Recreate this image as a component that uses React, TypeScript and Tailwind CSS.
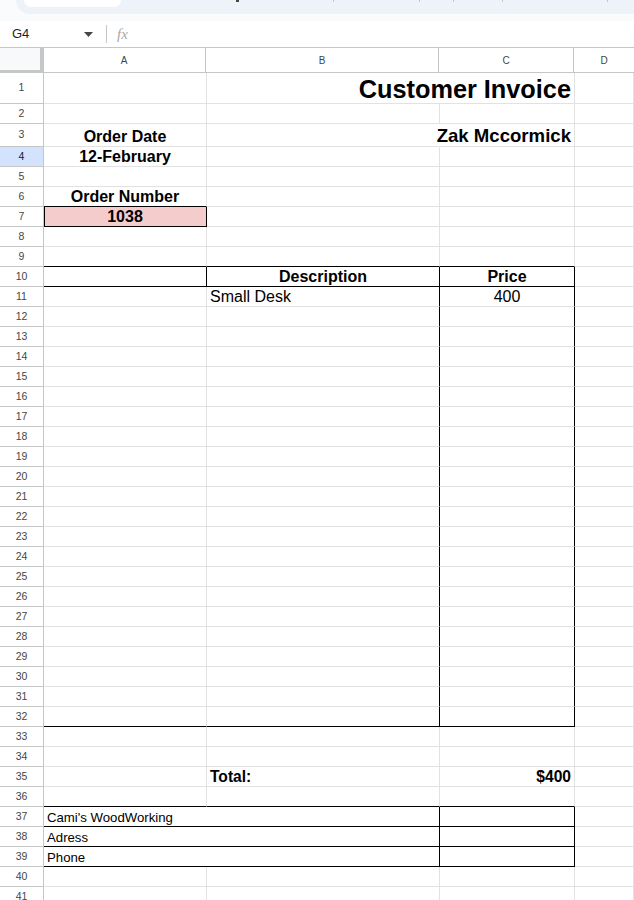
import React from 'react';

type Side = 'grid' | 'black' | 'none';

interface CellSpec {
  w: string;
  text?: string;
  align?: 'left' | 'center' | 'right';
  size?: string;
  bold?: boolean;
  r?: Side;
  b?: Side;
  extra?: string;
}

const colorR = (s: Side = 'grid') =>
  s === 'black' ? 'border-r-black' : s === 'none' ? 'border-r-white' : 'border-r-[#e2e2e2]';
const colorB = (s: Side = 'grid') =>
  s === 'black' ? 'border-b-black' : s === 'none' ? 'border-b-white' : 'border-b-[#e2e2e2]';

const A = 'w-[163px]';
const B = 'w-[233px]';
const C = 'w-[135px]';
const D = 'flex-1';
const BC = 'w-[368px]';
const AB = 'w-[396px]';

const Cell: React.FC<{ c: CellSpec }> = ({ c }) => {
  const justify =
    c.align === 'center' ? 'justify-center' : c.align === 'right' ? 'justify-end' : 'justify-start';
  return (
    <div
      className={`${c.w} shrink-0 flex items-end ${justify} px-[3px] border-r border-b ${colorR(c.r)} ${colorB(
        c.b
      )} ${c.extra ?? ''}`}
    >
      {c.text && (
        <span
          className={`whitespace-nowrap text-black ${c.size ?? 'text-[16px] leading-[18px]'} ${
            c.bold ? 'font-bold' : ''
          }`}
        >
          {c.text}
        </span>
      )}
    </div>
  );
};

const Row: React.FC<{ n: number; h: string; cells: CellSpec[]; active?: boolean }> = ({ n, h, cells, active }) => (
  <div className={`flex ${h}`}>
    <div
      className={`w-[44px] shrink-0 flex items-center justify-center border-r border-b border-[#c4c7c5] text-[10.5px] ${
        active ? 'bg-[#d3e3fd] text-[#041e49]' : 'bg-white text-[#444746]'
      }`}
    >
      {n}
    </div>
    {cells.map((c, i) => (
      <Cell key={i} c={c} />
    ))}
  </div>
);

const plain = (): CellSpec[] => [{ w: A }, { w: B }, { w: C }, { w: D }];

const boxMiddle = (): CellSpec[] => [{ w: A }, { w: B, r: 'black' }, { w: C, r: 'black' }, { w: D }];

const footer = (text: string): CellSpec[] => [
  { w: AB, text, size: 'text-[13.2px] leading-[15px]', r: 'black', b: 'black', extra: 'pb-[1px]' },
  { w: C, r: 'black', b: 'black' },
  { w: D },
];

export default function App() {
  const rows: { n: number; h: string; cells: CellSpec[] }[] = [];

  rows.push({
    n: 1,
    h: 'h-[31px]',
    cells: [
      { w: A },
      { w: BC, text: 'Customer Invoice', bold: true, align: 'right', size: 'text-[25.3px] leading-[28px]' },
      { w: D },
    ],
  });
  rows.push({ n: 2, h: 'h-[20px]', cells: plain() });
  rows.push({
    n: 3,
    h: 'h-[23px]',
    cells: [
      { w: A, text: 'Order Date', bold: true, align: 'center' },
      { w: B, r: 'none' },
      {
        w: C,
        text: 'Zak Mccormick',
        bold: true,
        align: 'right',
        size: 'text-[18.6px] leading-[21px]',
        extra: 'overflow-visible',
      },
      { w: D },
    ],
  });
  rows.push({ n: 4, h: 'h-[20px]', cells: [{ w: A, text: '12-February', bold: true, align: 'center' }, { w: B }, { w: C }, { w: D }] });
  rows.push({ n: 5, h: 'h-[20px]', cells: plain() });
  rows.push({
    n: 6,
    h: 'h-[20px]',
    cells: [{ w: A, text: 'Order Number', bold: true, align: 'center', b: 'black' }, { w: B }, { w: C }, { w: D }],
  });
  rows.push({
    n: 7,
    h: 'h-[20px]',
    cells: [
      {
        w: A,
        text: '1038',
        bold: true,
        align: 'center',
        r: 'black',
        b: 'black',
        extra: 'bg-[#f4cccc] shadow-[inset_1px_0_0_#000]',
      },
      { w: B },
      { w: C },
      { w: D },
    ],
  });
  rows.push({ n: 8, h: 'h-[20px]', cells: plain() });
  rows.push({
    n: 9,
    h: 'h-[20px]',
    cells: [{ w: A, b: 'black' }, { w: B, b: 'black' }, { w: C, b: 'black' }, { w: D }],
  });
  rows.push({
    n: 10,
    h: 'h-[20px]',
    cells: [
      { w: A, r: 'black', b: 'black' },
      { w: B, text: 'Description', bold: true, align: 'center', r: 'black', b: 'black' },
      { w: C, text: 'Price', bold: true, align: 'center', r: 'black', b: 'black' },
      { w: D },
    ],
  });
  rows.push({
    n: 11,
    h: 'h-[20px]',
    cells: [
      { w: A },
      { w: B, text: 'Small Desk', r: 'black' },
      { w: C, text: '400', align: 'center', r: 'black' },
      { w: D },
    ],
  });
  for (let n = 12; n <= 31; n++) rows.push({ n, h: 'h-[20px]', cells: boxMiddle() });
  rows.push({
    n: 32,
    h: 'h-[20px]',
    cells: [{ w: A, b: 'black' }, { w: B, r: 'black', b: 'black' }, { w: C, r: 'black', b: 'black' }, { w: D }],
  });
  rows.push({ n: 33, h: 'h-[20px]', cells: plain() });
  rows.push({ n: 34, h: 'h-[20px]', cells: plain() });
  rows.push({
    n: 35,
    h: 'h-[20px]',
    cells: [
      { w: A },
      { w: B, text: 'Total:', bold: true, size: 'text-[15.6px] leading-[17px]', extra: 'pb-[1px]' },
      { w: C, text: '$400', bold: true, align: 'right', size: 'text-[15.6px] leading-[17px]', extra: 'pb-[1px]' },
      { w: D },
    ],
  });
  rows.push({
    n: 36,
    h: 'h-[20px]',
    cells: [{ w: A, b: 'black' }, { w: B, b: 'black' }, { w: C, b: 'black' }, { w: D }],
  });
  rows.push({ n: 37, h: 'h-[20px]', cells: footer("Cami's WoodWorking") });
  rows.push({ n: 38, h: 'h-[20px]', cells: footer('Adress') });
  rows.push({ n: 39, h: 'h-[20px]', cells: footer('Phone') });
  rows.push({ n: 40, h: 'h-[20px]', cells: plain() });
  rows.push({ n: 41, h: 'h-[20px]', cells: plain() });

  return (
    <div className="w-[634px] h-[900px] overflow-hidden bg-white font-['Liberation_Sans',Arial,sans-serif]">
      {/* toolbar remnant */}
      <div className="h-[21px] bg-[#f9fbfd]">
        <div className="ml-[16px] h-[14px] bg-[#eef2f9] rounded-bl-[14px] flex items-start">
          <div className="ml-[8px] w-[97px] h-[7px] bg-white rounded-b-[8px]" />
          <div className="ml-[115px] w-[3px] h-[2px] bg-[#444746]" />
          <div className="ml-[94px] w-[1px] h-[2px] bg-[#c4c7c5]" />
          <div className="ml-[85px] w-[1px] h-[2px] bg-[#c4c7c5]" />
          <div className="ml-[33px] w-[1px] h-[2px] bg-[#c4c7c5]" />
          <div className="ml-[48px] w-[1px] h-[2px] bg-[#c4c7c5]" />
          <div className="ml-[104px] w-[1px] h-[2px] bg-[#c4c7c5]" />
        </div>
      </div>

      {/* formula bar */}
      <div className="h-[27px] flex items-center border-b border-[#c4c7c5] bg-white">
        <span className="ml-[12px] w-[70px] text-[13px] text-[#1f1f1f]">G4</span>
        <svg width="9" height="5" viewBox="0 0 9 5" className="ml-[2px]">
          <path d="M0 0h9L4.5 5z" fill="#444746" />
        </svg>
        <div className="ml-[13px] w-[1px] h-[18px] bg-[#c4c7c5]" />
        <span className="ml-[10px] font-['Liberation_Serif',serif] italic text-[15px] text-[#a8a8a8] leading-none">
          fx
        </span>
      </div>

      {/* column headers */}
      <div className="flex h-[25px] text-[10px] text-[#444746]">
        <div className="w-[44px] shrink-0 bg-[#f8f9fa] border-r-[4px] border-b-[3px] border-[#c4c7c5]" />
        <div className="w-[163px] shrink-0 -ml-[1px] flex items-center justify-center border-r border-b border-[#c4c7c5]">
          A
        </div>
        <div className="w-[233px] shrink-0 flex items-center justify-center border-r border-b border-[#c4c7c5]">
          B
        </div>
        <div className="w-[135px] shrink-0 flex items-center justify-center border-r border-b border-[#c4c7c5]">
          C
        </div>
        <div className="flex-1 flex items-center justify-center border-b border-[#c4c7c5]">D</div>
      </div>

      {rows.map((r) => (
        <Row key={r.n} n={r.n} h={r.h} cells={r.cells} active={r.n === 4} />
      ))}
    </div>
  );
}
